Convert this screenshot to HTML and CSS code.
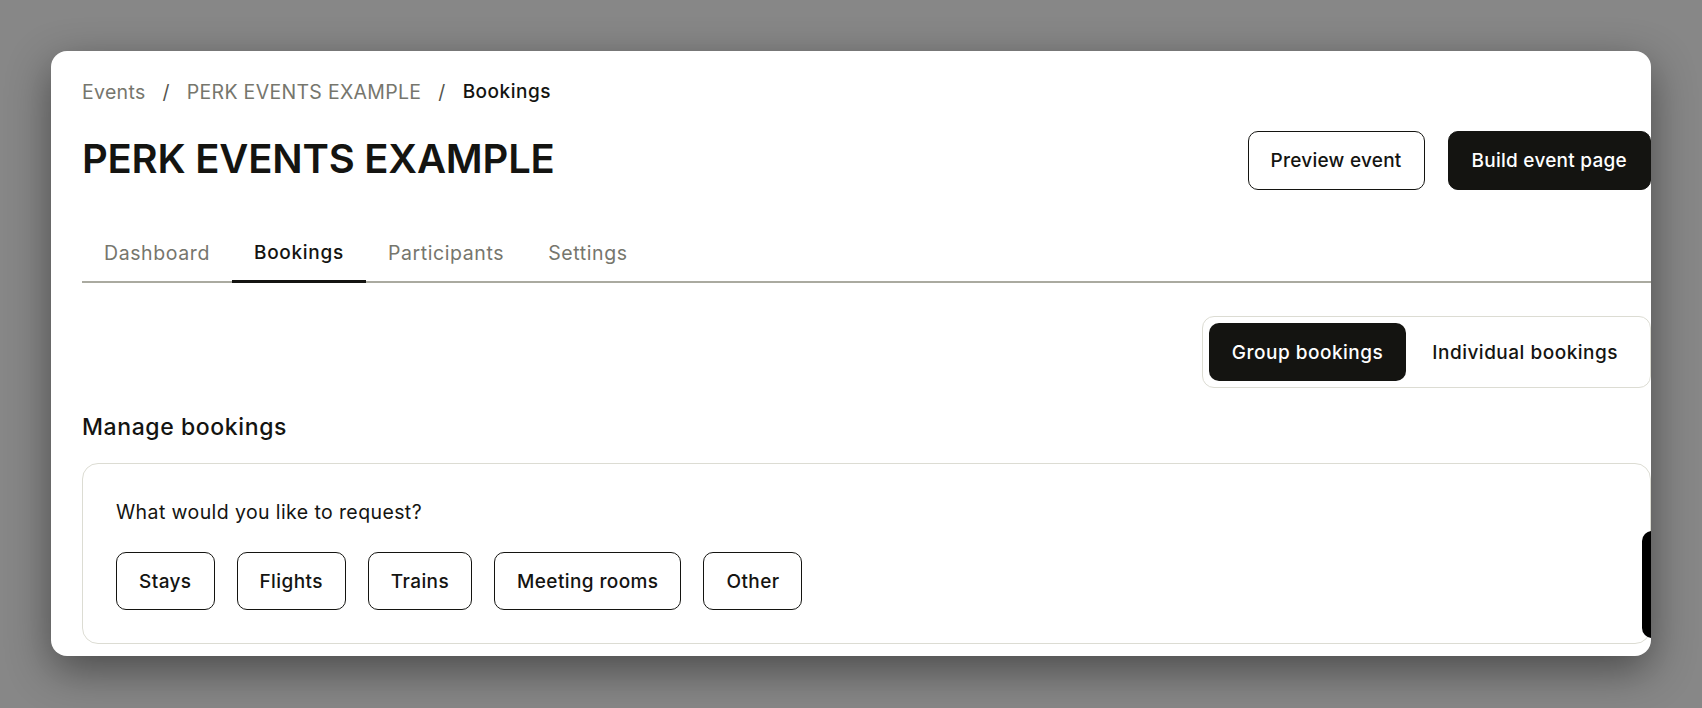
FILE: index.html
```html
<!DOCTYPE html>
<html lang="en">
<head>
  <meta charset="UTF-8">
  <title>PERK EVENTS EXAMPLE - Bookings</title>
  <link rel="stylesheet" href="styles.css">
</head>
<body>
  <div class="window">
    <div class="crumbs">
      <a href="#">Events</a>
      <span class="sep">/</span>
      <a href="#">PERK EVENTS EXAMPLE</a>
      <span class="sep">/</span>
      <span class="current">Bookings</span>
    </div>

    <div class="page-head">
      <h1>PERK EVENTS EXAMPLE</h1>
      <div class="actions">
        <button class="btn btn-outline">Preview event</button>
        <button class="btn btn-dark">Build event page</button>
      </div>
    </div>

    <nav class="tabs">
      <a href="#">Dashboard</a>
      <a href="#" class="active">Bookings</a>
      <a href="#">Participants</a>
      <a href="#">Settings</a>
    </nav>

    <div class="toggle-row">
      <div class="toggle">
        <button class="selected">Group bookings</button>
        <button>Individual bookings</button>
      </div>
    </div>

    <h2>Manage bookings</h2>

    <section class="request-box">
      <p>What would you like to request?</p>
      <div class="options">
        <button class="option">Stays</button>
        <button class="option">Flights</button>
        <button class="option">Trains</button>
        <button class="option">Meeting rooms</button>
        <button class="option">Other</button>
      </div>
    </section>

    <!-- help launcher, sits on the right edge -->
    <div class="launcher"></div>
  </div>
</body>
</html>
```

FILE: styles.css
```css
body { margin: 0; padding: 51px 0 0 51px; background-color: #878787; font-family: "Inter", "Liberation Sans", sans-serif; color: #141411; overflow: hidden; height: 708px; box-sizing: border-box; }
button { font-family: inherit; cursor: pointer; }

.window {
  position: relative;
  width: 1600px;
  height: 605px;
  box-sizing: border-box;
  padding: 29px 0 0 31px;
  background-color: #fff;
  border-radius: 16px;
  overflow: hidden;
  box-shadow: 0 14px 44px rgba(0,0,0,0.45);
}

/* breadcrumb */
.crumbs { display: flex; align-items: center; gap: 17px; font-size: 19.5px; letter-spacing: 0.3px; line-height: 24px; }
.crumbs a { color: #76766d; text-decoration: none; }
.crumbs .sep { color: #55554e; }
.crumbs .current { font-size: 19px; font-weight: 500; letter-spacing: 0.5px; color: #141411; }

/* title + buttons */
.page-head { display: flex; align-items: center; justify-content: space-between; margin-top: 27px; height: 59px; }
h1 { margin: 0 0 4px; font-size: 40px; font-weight: 600; letter-spacing: -0.2px; }
.actions { display: flex; gap: 23px; }
.btn { height: 59px; padding: 0 22px; font-size: 19px; font-weight: 500; letter-spacing: 0.25px; border-radius: 10px; }
.btn-outline { background: #fff; color: #141411; border: 1px solid #141411; }
.btn-dark { background: #141411; color: #fff; border: 1px solid #141411; padding: 0 23px; }

/* tabs */
.tabs { display: flex; margin-top: 51px; border-bottom: 2px solid #aaaaa0; }
.tabs a { padding: 0 22px 16px; font-size: 19.5px; letter-spacing: 0.6px; line-height: 24px; color: #76766d; text-decoration: none; }
.tabs a.active { color: #141411; font-size: 19px; font-weight: 500; letter-spacing: 0.7px; border-bottom: 3px solid #141411; margin-bottom: -2px; padding-bottom: 15px; }

/* group / individual switch */
.toggle-row { display: flex; justify-content: flex-end; margin-top: 33px; }
.toggle { display: flex; padding: 6px; border: 1px solid #dcdcd3; border-radius: 12px; }
.toggle button { height: 58px; padding: 0 26px; font-size: 19px; font-weight: 500; letter-spacing: 0.5px; background: none; border: none; border-radius: 10px; color: #141411; }
.toggle button.selected { background: #141411; color: #fff; padding: 0 23px; }

h2 { margin: 25px 0 0; font-size: 23px; line-height: 28px; font-weight: 500; letter-spacing: 0.6px; }

/* request options */
.request-box {
  margin-top: 22px;
  padding: 36px 33px 33px;
  border: 1px solid #dcdcd3;
  border-radius: 16px;
}
.request-box p { margin: 0; font-size: 19.5px; letter-spacing: 0.4px; line-height: 24px; }
.options { display: flex; gap: 22px; margin-top: 28px; }
.option { height: 58px; padding: 0 22px; font-size: 19px; font-weight: 500; letter-spacing: 0.4px; background: #fff; color: #141411; border: 1px solid #141411; border-radius: 10px; }

.launcher {
  position: absolute;
  left: 1591px;
  top: 480px;
  width: 40px;
  height: 107px;
  background: #000;
  border-radius: 10px;
}
```
